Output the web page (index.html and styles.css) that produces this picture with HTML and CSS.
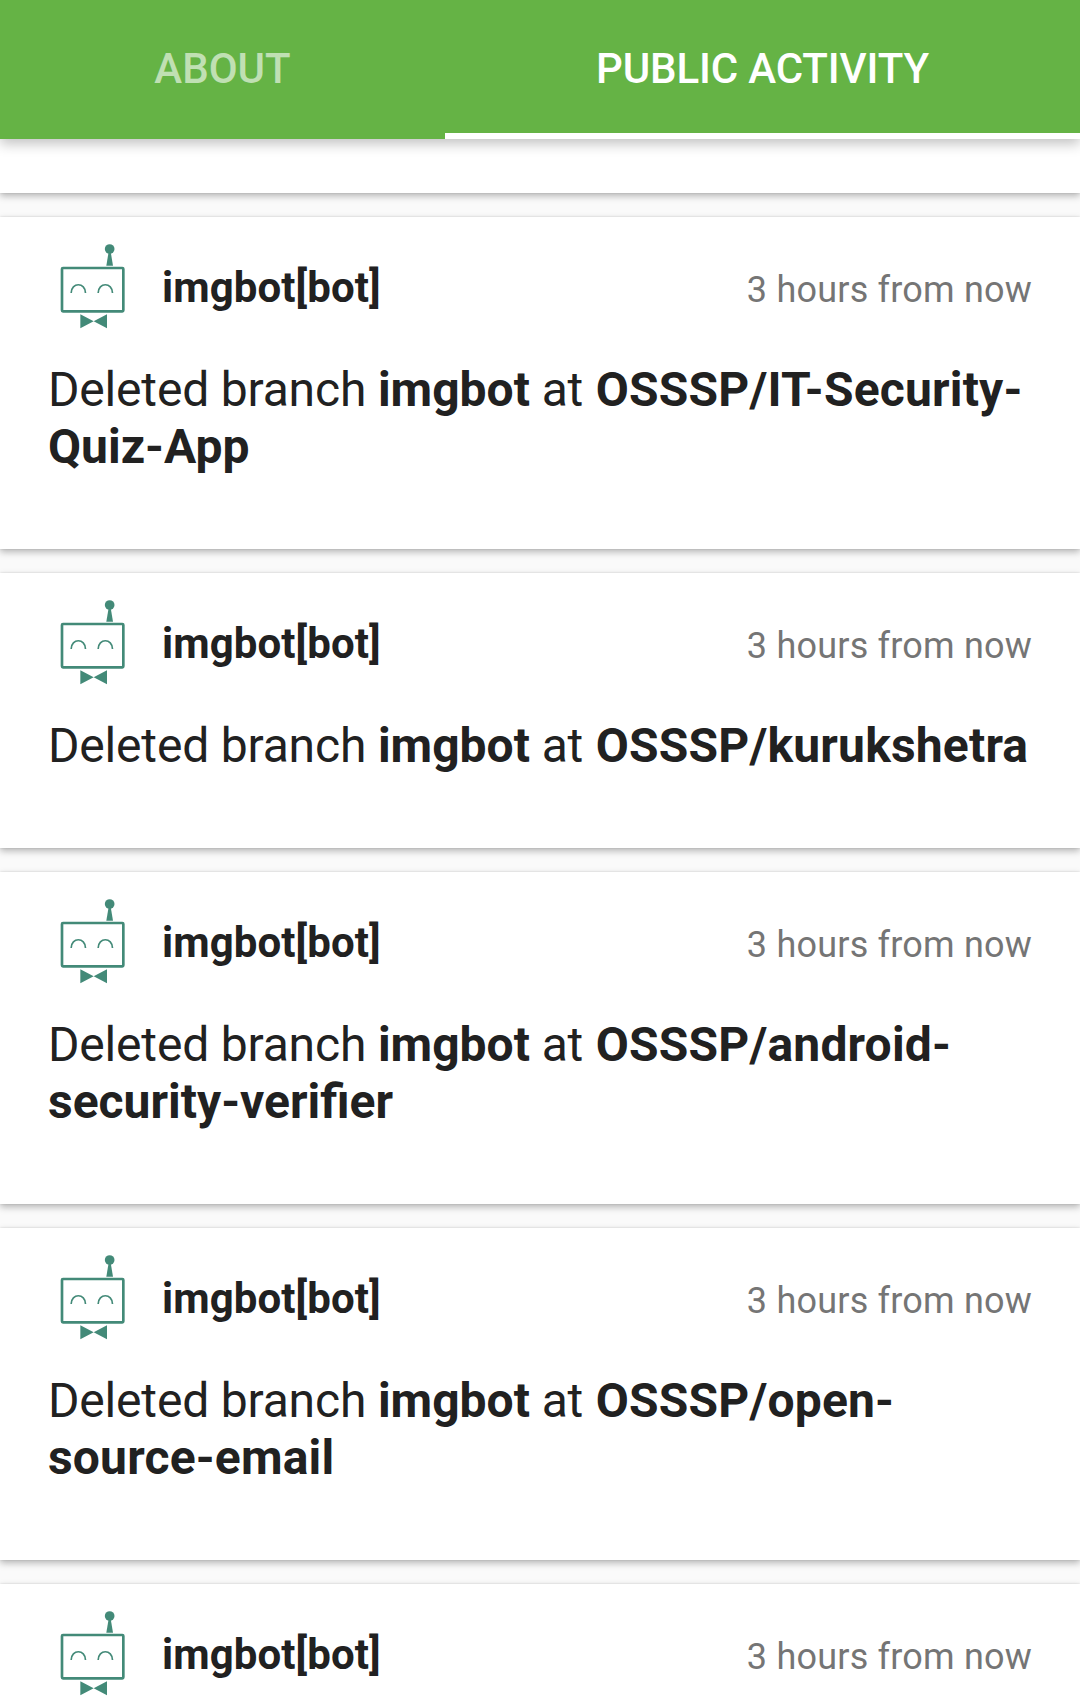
FILE: index.html
```html
<!DOCTYPE html>
<html lang="en">
<head>
<meta charset="utf-8">
<title>Public activity</title>
<link rel="stylesheet" href="styles.css">
</head>
<body>
<svg width="0" height="0" class="defs" aria-hidden="true">
  <symbol id="bot" viewBox="0 0 270 270">
    <rect x="42" y="81" width="184" height="130" rx="3" fill="none" stroke="#438a78" stroke-width="8"/>
    <circle cx="185" cy="24" r="14.500" fill="#438a78"/>
    <path d="M182 32h6l7 42h-20z" fill="#438a78"/>
    <path d="M69.500 156c0-33 43-33 43 0M150.500 156c0-33 43-33 43 0" fill="none" stroke="#438a78" stroke-width="5"/>
    <path d="M97 220l40 21-40 21zM177 220l-40 21 40 21z" fill="#438a78"/>
  </symbol>
</svg>
<nav class="tabs">
  <a class="tab tab-about">ABOUT</a>
  <a class="tab tab-activity">PUBLIC ACTIVITY</a>
</nav>
<main class="feed">
  <article class="card card-tail"></article>
  <article class="card">
    <header class="head"><svg class="avatar"><use href="#bot"/></svg><span class="name">imgbot[bot]</span><time class="time">3 hours from now</time></header>
    <p class="message">Deleted branch <b>imgbot</b> at <b><span class="repo">OSSSP/IT-Security-</span><br>Quiz-App</b></p>
  </article>
  <article class="card">
    <header class="head"><svg class="avatar"><use href="#bot"/></svg><span class="name">imgbot[bot]</span><time class="time">3 hours from now</time></header>
    <p class="message">Deleted branch <b>imgbot</b> at <b class="repo">OSSSP/kurukshetra</b></p>
  </article>
  <article class="card">
    <header class="head"><svg class="avatar"><use href="#bot"/></svg><span class="name">imgbot[bot]</span><time class="time">3 hours from now</time></header>
    <p class="message">Deleted branch <b>imgbot</b> at <b><span class="repo">OSSSP/android-</span><br>security-verifier</b></p>
  </article>
  <article class="card">
    <header class="head"><svg class="avatar"><use href="#bot"/></svg><span class="name">imgbot[bot]</span><time class="time">3 hours from now</time></header>
    <p class="message">Deleted branch <b>imgbot</b> at <b class="repo">OSSSP/open-<br>source-email</b></p>
  </article>
  <article class="card">
    <header class="head"><svg class="avatar"><use href="#bot"/></svg><span class="name">imgbot[bot]</span><time class="time">3 hours from now</time></header>
  </article>
</main>
</body>
</html>
```
FILE: styles.css
```css
* { box-sizing: border-box; }
body {
  margin: 0;
  height: 1699px;
  overflow: hidden;
  display: flex;
  flex-direction: column;
  background: #fafafa;
  color: #212121;
  font-family: Roboto, sans-serif;
}
.defs { position: absolute; }
.tabs {
  position: relative;
  z-index: 1;
  flex: none;
  display: flex;
  height: 139px;
  background: #65b345;
  box-shadow: 0 5px 12px rgba(0, 0, 0, .24);
}
.tab {
  padding-top: 44px;
  text-align: center;
  font-size: 42px;
  font-weight: 500;
  line-height: 49px;
  color: #fff;
}
.tab-about { width: 445px; color: rgba(255, 255, 255, .6); }
.tab-activity { flex: 1; border-bottom: 6px solid #fff; letter-spacing: -.15px; }
.feed {
  flex: 1;
  min-height: 0;
  display: flex;
  flex-direction: column;
  gap: 24px;
}
.card {
  flex: none;
  padding: 24px 48px 74px;
  background: #fff;
  box-shadow: 0 3px 7px rgba(0, 0, 0, .28), 0 0 2px rgba(0, 0, 0, .12);
}
.card-tail { height: 54px; padding: 0; }
.head {
  display: flex;
  align-items: center;
  height: 90px;
}
.avatar { width: 90px; height: 90px; }
.name {
  margin-left: 24px;
  padding-top: 4px;
  font-size: 42px;
  font-weight: 700;
  line-height: 50px;
  letter-spacing: .08px;
}
.time {
  margin-left: auto;
  padding-top: 8px;
  font-size: 36px;
  line-height: 42px;
  letter-spacing: .2px;
  color: #757575;
}
.message {
  margin: 30px 0 0;
  font-size: 48px;
  line-height: 57px;
  letter-spacing: -.18px;
  white-space: nowrap;
}
.message b { letter-spacing: normal; }
.message .repo { margin-left: 1px; letter-spacing: .18px; }
```
